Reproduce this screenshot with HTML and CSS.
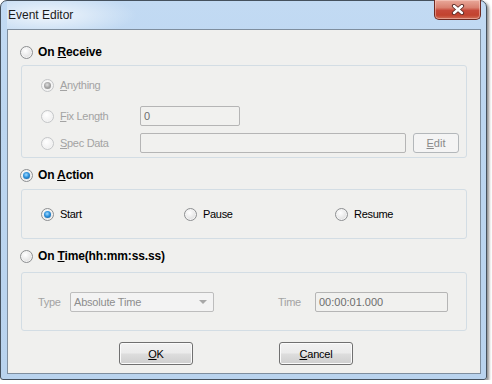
FILE: index.html
```html
<!DOCTYPE html>
<html>
<head>
<meta charset="utf-8">
<link rel="stylesheet" href="styles.css">
</head>
<body>
<div class="window">
  <div class="titlebar">
    <span class="title">Event Editor</span>
    <div class="close">
      <svg width="14" height="11" viewBox="0 0 14 11">
        <path d="M3 2 L11 9 M11 2 L3 9" stroke="#5a2a25" stroke-width="4.2" stroke-linecap="round"/>
        <path d="M3 2 L11 9 M11 2 L3 9" stroke="#ffffff" stroke-width="2.4" stroke-linecap="round"/>
      </svg>
    </div>
  </div>
  <div class="client">
    <div class="heading h1">
      <span class="radio"></span>
      <span class="htext">On <u>R</u>eceive</span>
    </div>
    <div class="group g1">
      <div class="row r1">
        <div class="opt"><span class="radio dis checked"></span><span class="dlabel"><u>A</u>nything</span></div>
      </div>
      <div class="row r2">
        <div class="opt"><span class="radio dis"></span><span class="dlabel"><u>F</u>ix Length</span></div>
        <div class="input w-fix">0</div>
      </div>
      <div class="row r3">
        <div class="opt"><span class="radio dis"></span><span class="dlabel"><u>S</u>pec Data</span></div>
        <div class="input w-spec"></div>
        <div class="btn-dis"><u>E</u>dit</div>
      </div>
    </div>

    <div class="heading h2">
      <span class="radio checked"></span>
      <span class="htext">On <u>A</u>ction</span>
    </div>
    <div class="group g2">
      <div class="opt"><span class="radio checked"></span><span class="label">Start</span></div>
      <div class="opt"><span class="radio"></span><span class="label">Pause</span></div>
      <div class="opt"><span class="radio"></span><span class="label">Resume</span></div>
    </div>

    <div class="heading h3">
      <span class="radio"></span>
      <span class="htext">On <u>T</u>ime(hh:mm:ss.ss)</span>
    </div>
    <div class="group g3">
      <span class="dlabel lbl-type">Type</span>
      <div class="combo"><span class="ctext">Absolute Time</span><span class="arrow"></span></div>
      <span class="dlabel lbl-time">Time</span>
      <div class="input w-time">00:00:01.000</div>
    </div>

    <div class="buttons">
      <div class="btn"><u>O</u>K</div>
      <div class="btn"><u>C</u>ancel</div>
    </div>
  </div>
</div>
</body>
</html>
```

FILE: styles.css
```css
html, body {
  margin: 0;
  padding: 0;
  background: #ffffff;
}

body {
  font-family: "Liberation Sans", Arial, sans-serif;
  font-size: 11px;
}

u {
  text-decoration: underline;
  text-underline-offset: 1px;
}

.window {
  box-sizing: border-box;
  width: 487px;
  height: 380px;
  border: 1px solid #45515e;
  border-radius: 7px 7px 3px 3px;
  background: linear-gradient(to bottom, #c2daf3 0%, #bcd6f0 30%, #b9d3ee 100%);
  padding: 0 5px 5px 6px;
  display: flex;
  flex-direction: column;
  box-shadow: 2px 2px 3px rgba(0, 0, 0, 0.45);
}

.titlebar {
  height: 28px;
  display: flex;
  align-items: flex-start;
  justify-content: space-between;
  background: radial-gradient(ellipse 90px 22px at 40px 14px, rgba(255,255,255,0.75), rgba(255,255,255,0) 100%);
}

.title {
  font-family: "Liberation Sans", Arial, sans-serif;
  font-size: 12px;
  line-height: 14px;
  color: #1b1b1b;
  padding: 7px 0 0 1px;
}

.close {
  box-sizing: border-box;
  width: 47px;
  height: 20px;
  margin-top: -1px;
  border: 1px solid #6f2a22;
  border-top: none;
  border-radius: 0 0 5px 5px;
  background: linear-gradient(to bottom, #e9a99b 0%, #d98170 40%, #c6493a 55%, #c2432f 80%, #d0705a 100%);
  box-shadow: inset 0 0 0 1px rgba(255, 220, 210, 0.45);
  display: flex;
  align-items: center;
  justify-content: center;
}

.close svg {
  display: block;
}

.client {
  box-sizing: border-box;
  height: 345px;
  border: 1px solid #7f8e9e;
  background: #f0f0ee;
  padding: 0 13px;
  display: flex;
  flex-direction: column;
}

/* radios */
.radio {
  position: relative;
  box-sizing: border-box;
  width: 13px;
  height: 13px;
  flex: none;
  border-radius: 50%;
  border: 1px solid #8d8f91;
  background: radial-gradient(circle at 40% 35%, #ffffff 0%, #eeeeee 40%, #d3d3d3 100%);
  box-shadow: inset 0 0 0 1px #f4f4f4;
}

.radio.dis {
  border-color: #c4c6c8;
  background: radial-gradient(circle at 40% 35%, #ffffff 0%, #f4f4f4 50%, #e6e6e6 100%);
}

.radio.checked::after {
  content: "";
  position: absolute;
  left: 2px;
  top: 2px;
  width: 7px;
  height: 7px;
  border-radius: 50%;
  background: radial-gradient(circle at 45% 40%, #a6dcff 0%, #2f93dd 45%, #0c4f8c 100%);
}

.radio.dis.checked::after {
  background: radial-gradient(circle at 45% 40%, #e0e0e0 0%, #a5a5a5 50%, #858585 100%);
}

/* headings */
.heading {
  height: 16px;
  display: flex;
  align-items: center;
  margin-left: -1px;
  gap: 5px;
}

.htext {
  font-weight: bold;
  font-size: 12px;
  color: #000000;
  letter-spacing: -0.15px;
}

.h1 { margin-top: 14px; }
.h2 { margin-top: 9px; }
.h3 { margin-top: 9px; }

/* groups */
.group {
  box-sizing: border-box;
  border: 1px solid #d3dde4;
  border-radius: 3px;
}

.g1 {
  margin-top: 5px;
  height: 93px;
  padding: 9px 7px 4px 19px;
  display: flex;
  flex-direction: column;
}

.row {
  height: 20px;
  display: flex;
  align-items: center;
}

.r2 { margin-top: 11px; }
.r3 { margin-top: 7px; }

.opt {
  display: flex;
  align-items: center;
  gap: 6px;
}

.g1 .opt {
  width: 99px;
}

.label {
  color: #000000;
  letter-spacing: -0.3px;
}

.dlabel {
  color: #a3a3a3;
  letter-spacing: -0.3px;
}

.input {
  box-sizing: border-box;
  height: 20px;
  border: 1px solid #b5b5b5;
  border-radius: 2px;
  background: #f1f1ef;
  color: #6d6d6d;
  padding: 0 3px;
  display: flex;
  align-items: center;
}

.w-fix { width: 100px; }
.w-spec { width: 266px; }
.w-time { width: 133px; }

.btn-dis {
  box-sizing: border-box;
  width: 46px;
  height: 20px;
  margin-left: 7px;
  border: 1px solid #b3b7ba;
  border-radius: 3px;
  background: #f4f4f4;
  color: #8a8a8a;
  display: flex;
  align-items: center;
  justify-content: center;
}

.g2 {
  margin-top: 6px;
  height: 50px;
  padding: 0 0 0 19px;
  display: grid;
  grid-template-columns: 143px 151px auto;
  align-items: center;
}

.g3 {
  margin-top: 8px;
  height: 59px;
  padding: 0 0 0 16px;
  display: flex;
  align-items: center;
}

.lbl-type { width: 32px; }
.lbl-time { width: 37px; margin-left: 64px; }

.combo {
  box-sizing: border-box;
  width: 144px;
  height: 20px;
  border: 1px solid #bdbdbd;
  border-radius: 2px;
  background: #f3f3f3;
  color: #8d8d8d;
  display: flex;
  align-items: center;
  justify-content: space-between;
  padding: 0 6px 0 3px;
  letter-spacing: -0.2px;
}

.arrow {
  width: 0;
  height: 0;
  border-left: 4px solid transparent;
  border-right: 4px solid transparent;
  border-top: 4px solid #a8a8a8;
}

.buttons {
  margin-top: 11px;
  display: flex;
  padding-left: 98px;
  gap: 86px;
}

.btn {
  box-sizing: border-box;
  width: 74px;
  height: 23px;
  border: 1px solid #707070;
  border-radius: 3px;
  background: linear-gradient(to bottom, #f2f2f2 0%, #ebebeb 48%, #dddddd 52%, #cfcfcf 100%);
  box-shadow: inset 0 0 0 1px #fbfbfb;
  color: #000000;
  display: flex;
  align-items: center;
  justify-content: center;
  letter-spacing: -0.2px;
}
```
